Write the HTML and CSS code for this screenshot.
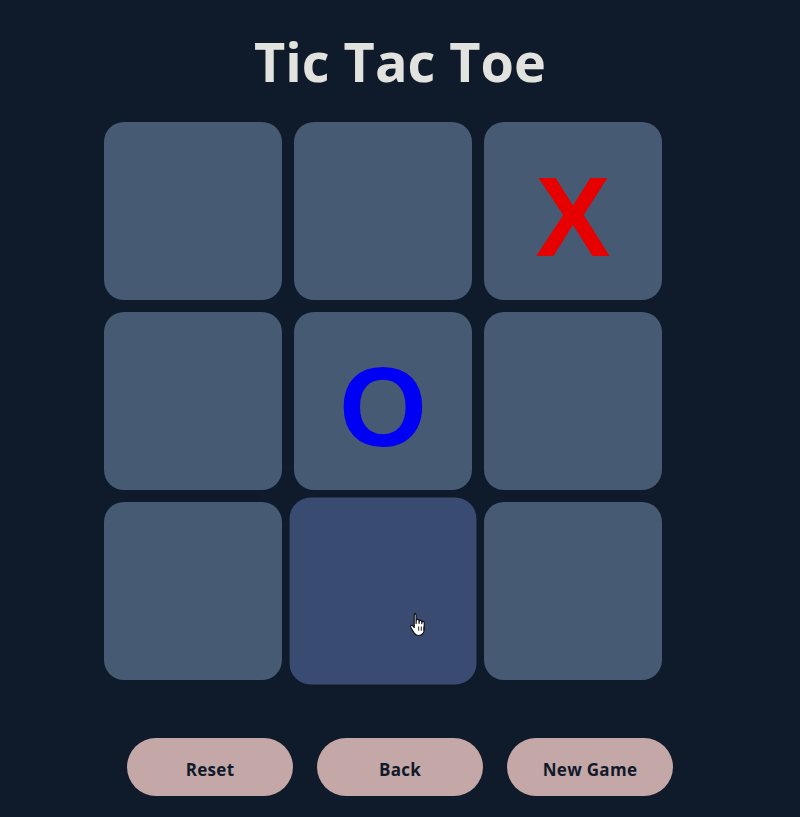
FILE: index.html
```html
<!DOCTYPE html>
<html>
<head>
<meta charset="utf-8">
<link rel="stylesheet" href="styles.css">
</head>
<body>
<main class="app">
  <h1 class="title">Tic Tac Toe</h1>
  <div class="board-wrap">
    <div class="board">
      <div class="cell"></div>
      <div class="cell"></div>
      <div class="cell"><span class="mark mark-x">X</span></div>
      <div class="cell"></div>
      <div class="cell"><span class="mark mark-o">O</span></div>
      <div class="cell"></div>
      <div class="cell"></div>
      <div class="cell cell-hover">
        <svg class="cursor" width="18" height="25" viewBox="0 0 16 22">
          <path d="M4.5 1.2c.8 0 1.3.6 1.3 1.3v7.2l.1-2.4c0-.7.6-1.2 1.2-1.2s1.2.5 1.2 1.2v2.2l.1-1.4c0-.7.5-1.1 1.1-1.1s1.1.5 1.1 1.1v1.6l.1-.8c0-.6.5-1 1-1s1 .5 1 1.1v5.6c0 2.9-2 5.2-4.700 5.2H7.6c-1.6 0-2.6-.8-3.4-2L1.3 13c-.4-.6-.2-1.3.3-1.6.6-.4 1.3-.2 1.7.4l.9 1.3V2.5c0-.7.6-1.300 1.3-1.3z" fill="#fff" stroke="#111" stroke-width="1" stroke-linejoin="round"/>
          <path d="M8 12.2v3.6M10.2 12.2v3.6M12.3 12.2v3.6" stroke="#111" stroke-width="0.8"/>
        </svg>
      </div>
      <div class="cell"></div>
    </div>
  </div>
  <div class="actions">
    <button class="btn">Reset</button>
    <button class="btn">Back</button>
    <button class="btn">New Game</button>
  </div>
</main>
</body>
</html>
```
FILE: styles.css
```css
html, body {
  margin: 0;
  padding: 0;
  background: #0f1a2a;
}
body {
  width: 800px;
  height: 817px;
  overflow: hidden;
  font-family: "Open Sans", "Noto Sans", sans-serif;
}
.app {
  display: flex;
  flex-direction: column;
  align-items: center;
}
.title {
  margin: 33px 0 0;
  font-size: 54px;
  line-height: 56px;
  font-weight: 700;
  color: #e2e2de;
  letter-spacing: 0;
}
.board-wrap {
  align-self: stretch;
  padding-left: 104px;
  margin-top: 33px;
}
.board {
  display: grid;
  grid-template-columns: repeat(3, 178px);
  grid-template-rows: repeat(3, 178px);
  gap: 12px;
}
.cell {
  position: relative;
  background: #465a74;
  border-radius: 20px;
  display: flex;
  align-items: center;
  justify-content: center;
}
.cell-hover {
  background: #3a4b72;
  transform: scale(1.05);
}
.mark {
  font-family: "Liberation Sans", Arial, sans-serif;
  font-weight: 700;
  font-size: 113px;
  line-height: 1;
  padding-top: 12px;
}
.mark-x { color: #e60000; }
.mark-o { color: #0000f5; }
.cursor {
  position: absolute;
  left: 114px;
  top: 109px;
}
.actions {
  display: flex;
  gap: 24px;
  margin-top: 58px;
}
.btn {
  width: 166px;
  height: 58px;
  border: none;
  border-radius: 29px;
  background: #c4a7a7;
  color: #111a2b;
  font-family: "Open Sans", "Noto Sans", sans-serif;
  font-weight: 700;
  font-size: 17px;
  letter-spacing: 0.3px;
  padding: 4px 0 0;
}
```
